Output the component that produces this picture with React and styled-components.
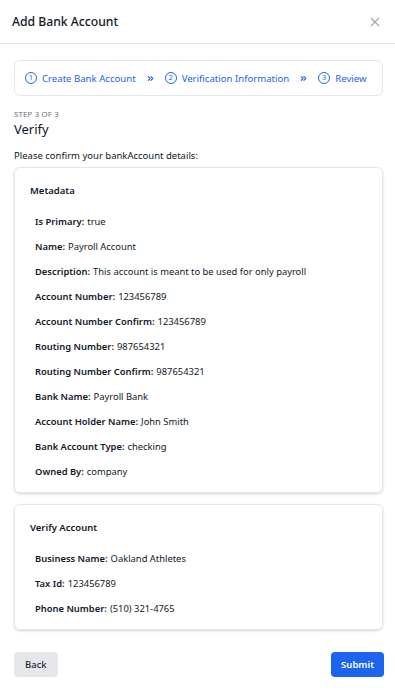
import React from "react";
import styled, { createGlobalStyle } from "styled-components";

const Global = createGlobalStyle`
  * { box-sizing: border-box; }
  html, body { margin: 0; padding: 0; background: #fff; }
  body { font-family: "Noto Sans", "Open Sans", Arial, sans-serif; color: #111827; }
`;

const Modal = styled.div`
  width: 395px;
  min-height: 690px;
  display: flex;
  flex-direction: column;
  background: #fff;
`;

const Header = styled.div`
  height: 44px;
  display: flex;
  align-items: center;
  justify-content: space-between;
  padding: 0 12px;
  border-bottom: 1px solid #e5e7eb;
`;

const Title = styled.h1`
  margin: 0;
  font-size: 12.2px;
  font-weight: 500;
  color: #111827;
`;

const CloseBtn = styled.button`
  border: 0;
  background: none;
  padding: 0;
  width: 16px;
  height: 16px;
  display: flex;
  align-items: center;
  justify-content: center;
  color: #9ca3af;
  cursor: pointer;
`;

const Body = styled.div`
  padding: 16px 12px 0 14px;
  display: flex;
  flex-direction: column;
`;

const Stepper = styled.div`
  height: 36px;
  border: 1px solid #e5e7eb;
  border-radius: 6px;
  display: flex;
  align-items: center;
  padding: 0 10px;
  gap: 10px;
`;

const Step = styled.div`
  display: flex;
  align-items: center;
  gap: 5px;
  color: #2563eb;
  font-size: 9.6px;
  white-space: nowrap;
`;

const StepNum = styled.span`
  width: 12px;
  height: 12px;
  border: 1px solid #2563eb;
  border-radius: 50%;
  display: inline-flex;
  align-items: center;
  justify-content: center;
  font-size: 7.5px;
  line-height: 1;
`;

const Chevrons = styled.svg`
  width: 9px;
  height: 9px;
  color: #2563eb;
  flex: none;
`;

const StepLabel = styled.div`
  margin-top: 13px;
  font-size: 7.8px;
  letter-spacing: 0.2px;
  color: #6b7280;
  text-transform: uppercase;
`;

const Heading = styled.h2`
  margin: 1px 0 0 0;
  font-size: 13px;
  font-weight: 400;
  color: #111827;
`;

const Intro = styled.p`
  margin: 11px 0 5px 0;
  font-size: 9.5px;
  color: #111827;
`;

const Card = styled.section`
  border: 1px solid #e5e7eb;
  border-radius: 6px;
  box-shadow: 0 1px 3px rgba(0, 0, 0, 0.12), 0 1px 2px rgba(0, 0, 0, 0.06);
  padding: 16px 15px 8px 15px;
  margin-bottom: 11px;
`;

const CardTitle = styled.h3`
  margin: 0 0 12px 0;
  font-size: 9.5px;
  font-weight: 600;
  color: #111827;
`;

const Row = styled.div`
  height: 25px;
  display: flex;
  align-items: center;
  padding-left: 5px;
  font-size: 9.4px;
  color: #111827;
`;

const Key = styled.span`
  font-weight: 600;
  margin-right: 3px;
`;

const Footer = styled.div`
  display: flex;
  justify-content: space-between;
  padding: 11px 11px 0 14px;
`;

const Button = styled.button`
  height: 25px;
  padding: 0 ${(p) => (p.$primary ? "10px" : "11px")};
  border: 0;
  border-radius: 4px;
  font-family: inherit;
  font-size: 9.5px;
  font-weight: ${(p) => (p.$primary ? 600 : 500)};
  background: ${(p) => (p.$primary ? "#1d64ee" : "#e5e7eb")};
  color: ${(p) => (p.$primary ? "#fff" : "#1f2937")};
  cursor: pointer;
`;

const ChevronsIcon = () => (
  <Chevrons viewBox="0 0 24 24" fill="none" stroke="currentColor" strokeWidth="3" strokeLinecap="round" strokeLinejoin="round">
    <path d="m6 17 5-5-5-5" />
    <path d="m13 17 5-5-5-5" />
  </Chevrons>
);

const metadata = [
  ["Is Primary", "true"],
  ["Name", "Payroll Account"],
  ["Description", "This account is meant to be used for only payroll"],
  ["Account Number", "123456789"],
  ["Account Number Confirm", "123456789"],
  ["Routing Number", "987654321"],
  ["Routing Number Confirm", "987654321"],
  ["Bank Name", "Payroll Bank"],
  ["Account Holder Name", "John Smith"],
  ["Bank Account Type", "checking"],
  ["Owned By", "company"],
];

const verify = [
  ["Business Name", "Oakland Athletes"],
  ["Tax Id", "123456789"],
  ["Phone Number", "(510) 321-4765"],
];

const steps = ["Create Bank Account", "Verification Information", "Review"];

export default function App() {
  return (
    <>
      <Global />
      <Modal>
        <Header>
          <Title>Add Bank Account</Title>
          <CloseBtn aria-label="Close">
            <svg width="10" height="10" viewBox="0 0 10 10" stroke="currentColor" strokeWidth="1.1">
              <path d="M1 1l8 8M9 1l-8 8" />
            </svg>
          </CloseBtn>
        </Header>
        <Body>
          <Stepper>
            {steps.map((s, i) => (
              <React.Fragment key={s}>
                {i > 0 && <ChevronsIcon />}
                <Step>
                  <StepNum>{i + 1}</StepNum>
                  {s}
                </Step>
              </React.Fragment>
            ))}
          </Stepper>
          <StepLabel>Step 3 of 3</StepLabel>
          <Heading>Verify</Heading>
          <Intro>Please confirm your bankAccount details:</Intro>
          <Card>
            <CardTitle>Metadata</CardTitle>
            {metadata.map(([k, v]) => (
              <Row key={k}>
                <Key>{k}:</Key>
                {v}
              </Row>
            ))}
          </Card>
          <Card>
            <CardTitle>Verify Account</CardTitle>
            {verify.map(([k, v]) => (
              <Row key={k}>
                <Key>{k}:</Key>
                {v}
              </Row>
            ))}
          </Card>
        </Body>
        <Footer>
          <Button>Back</Button>
          <Button $primary>Submit</Button>
        </Footer>
      </Modal>
    </>
  );
}
